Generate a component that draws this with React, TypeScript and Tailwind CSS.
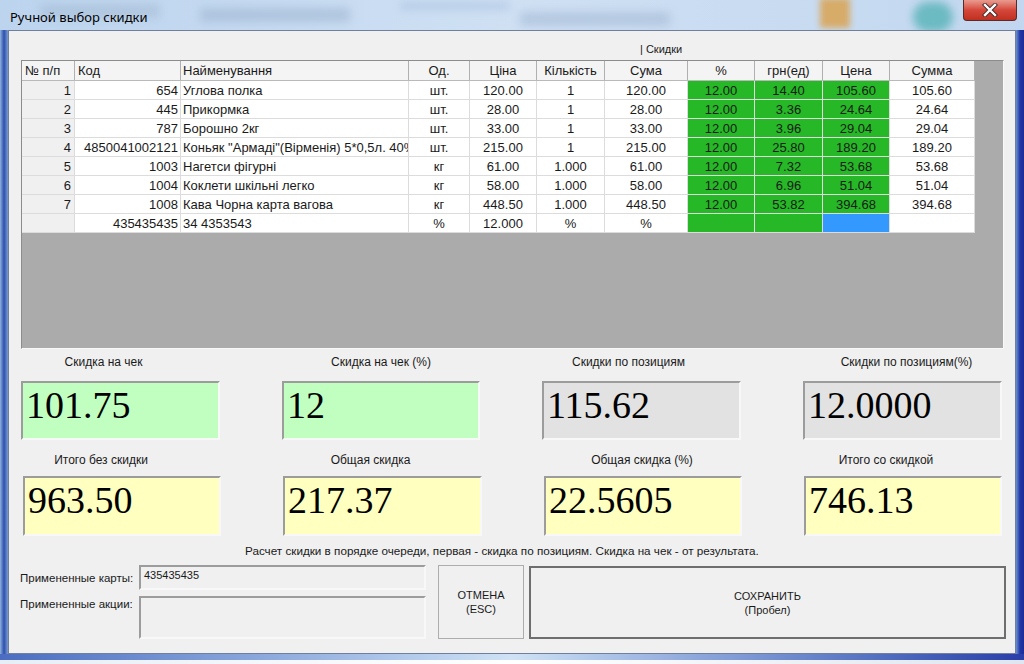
import React from 'react';

type Col = { w: string; title: string; head: string; cell: string };

const cols: Col[] = [
  { w: 'w-[53px]', title: '№ п/п', head: 'justify-start pl-[3px]', cell: 'justify-end pr-[3px]' },
  { w: 'w-[106px]', title: 'Код', head: 'justify-start pl-[3px]', cell: 'justify-end pr-[2px]' },
  { w: 'w-[228px]', title: 'Найменування', head: 'justify-start pl-[2px]', cell: 'justify-start pl-[2px]' },
  { w: 'w-[61px]', title: 'Од.', head: 'justify-center', cell: 'justify-center' },
  { w: 'w-[67px]', title: 'Ціна', head: 'justify-center', cell: 'justify-center' },
  { w: 'w-[68px]', title: 'Кількість', head: 'justify-center', cell: 'justify-center' },
  { w: 'w-[83px]', title: 'Сума', head: 'justify-center', cell: 'justify-center' },
  { w: 'w-[67px]', title: '%', head: 'justify-center', cell: 'justify-center' },
  { w: 'w-[68px]', title: 'грн(ед)', head: 'justify-center', cell: 'justify-center' },
  { w: 'w-[67px]', title: 'Цена', head: 'justify-center', cell: 'justify-center' },
  { w: 'w-[85px]', title: 'Сумма', head: 'justify-center', cell: 'justify-center' },
];

const rows: string[][] = [
  ['1', '654', 'Углова полка', 'шт.', '120.00', '1', '120.00', '12.00', '14.40', '105.60', '105.60'],
  ['2', '445', 'Прикормка', 'шт.', '28.00', '1', '28.00', '12.00', '3.36', '24.64', '24.64'],
  ['3', '787', 'Борошно 2кг', 'шт.', '33.00', '1', '33.00', '12.00', '3.96', '29.04', '29.04'],
  ['4', '4850041002121', 'Коньяк "Армаді"(Вірменія) 5*0,5л. 40%', 'шт.', '215.00', '1', '215.00', '12.00', '25.80', '189.20', '189.20'],
  ['5', '1003', 'Нагетси фігурні', 'кг', '61.00', '1.000', '61.00', '12.00', '7.32', '53.68', '53.68'],
  ['6', '1004', 'Коклети шкільні легко', 'кг', '58.00', '1.000', '58.00', '12.00', '6.96', '51.04', '51.04'],
  ['7', '1008', 'Кава Чорна карта вагова', 'кг', '448.50', '1.000', '448.50', '12.00', '53.82', '394.68', '394.68'],
  ['', '435435435', '34 4353543', '%', '12.000', '%', '%', '', '', '', ''],
];

function cellBg(r: number, c: number): string {
  if (c === 0) return 'bg-[#f0f0f0]';
  if (c === 7 || c === 8) return 'bg-[#26b826]';
  if (c === 9) return r === 7 ? 'bg-[#3399ff]' : 'bg-[#26b826]';
  return 'bg-white';
}

function Grid() {
  return (
    <div className="ml-[12px] w-[983px] h-[289px] bg-[#ababab] border-t border-l border-[#8c8c8c] border-r border-b border-r-[#f8f8f8] border-b-[#f8f8f8]">
      <div className="flex h-[20px] w-[953px] bg-[#f4f4f4] border-b border-[#b9b9b9]">
        {cols.map((c, i) => (
          <div key={i} className={`${c.w} ${c.head} flex items-center shrink-0 border-r border-[#b0b0b0] text-[13px] leading-[15px] text-[#1a1a1a] whitespace-nowrap overflow-hidden`}>
            {c.title}
          </div>
        ))}
      </div>
      {rows.map((row, r) => (
        <div key={r} className="flex h-[19px] w-[953px]">
          {row.map((v, c) => (
            <div key={c} className={`${cols[c].w} ${cols[c].cell} ${cellBg(r, c)} flex items-center shrink-0 border-r border-b border-[#dcdcdc] text-[13px] leading-[15px] text-[#1a1a1a] whitespace-nowrap overflow-hidden`}>
              {v}
            </div>
          ))}
        </div>
      ))}
    </div>
  );
}

function BigBox({ value, bg, w }: { value: string; bg: string; w: string }) {
  return (
    <div className={`${w} ${bg} shrink-0 border-2 border-t-[#9c9c9c] border-l-[#9c9c9c] border-r-[#f8f8f8] border-b-[#f8f8f8] pl-[3px] pt-[0px] font-['Liberation_Serif','Times_New_Roman',serif] text-[38px] leading-[44px] text-black`}>
      {value}
    </div>
  );
}

export default function App() {
  return (
    <div className="relative w-[1024px] h-[664px] overflow-hidden flex flex-col bg-gradient-to-b from-[#c4d9f1] to-[#a9c4e6] font-['Liberation_Sans',Arial,sans-serif]">
      {/* title bar */}
      <div className="relative h-[30px] shrink-0 overflow-hidden bg-gradient-to-r from-[#bcd4ee] via-[#cfe0f3] to-[#c2d7ef]">
        <div className="absolute left-[40px] top-[4px] w-[120px] h-[14px] bg-[#a6bcd6] blur-[5px] opacity-60" />
        <div className="absolute left-[200px] top-[8px] w-[150px] h-[14px] bg-[#9fb6d2] blur-[5px] opacity-60" />
        <div className="absolute left-[400px] top-[2px] w-[110px] h-[8px] bg-[#aac2e0] blur-[4px] opacity-60" />
        <div className="absolute left-[520px] top-[12px] w-[150px] h-[14px] bg-[#a3b9d4] blur-[5px] opacity-60" />
        <div className="absolute left-[820px] top-[-2px] w-[30px] h-[30px] bg-[#d9a65a] blur-[3px] opacity-90" />
        <div className="absolute left-[913px] top-[2px] w-[40px] h-[30px] rounded-full bg-[#63b7be] blur-[4px] opacity-90" />
        <div className="absolute left-[10px] top-[7px] text-[13px] leading-[20px] text-black font-['Noto_Sans',sans-serif]">
          Ручной выбор скидки
        </div>
        <div className="absolute left-[963px] top-0 w-[54px] h-[21px] rounded-b-[4px] border border-t-0 border-[#5a2a28] bg-gradient-to-b from-[#e89a90] via-[#d5473a] to-[#c0301f] flex items-center justify-center">
          <svg width="16" height="14" viewBox="0 0 16 14">
            <path d="M3 2 L13 12 M13 2 L3 12" stroke="#3b2a2a" strokeWidth="4.2" strokeLinecap="square" />
            <path d="M3 2 L13 12 M13 2 L3 12" stroke="#ffffff" strokeWidth="2.4" strokeLinecap="square" />
          </svg>
        </div>
      </div>
      {/* middle */}
      <div className="flex h-[624px] shrink-0">
        <div className="w-[8px] shrink-0 bg-gradient-to-r from-[#8fb0dc] via-[#2f4fae] to-[#7e9bd0]" />
        <div className="w-[1008px] shrink-0 bg-[#f0f0f0] border border-[#6f7f9c] flex flex-col text-[#1a1a1a]">
          <div className="h-[29px] shrink-0 pl-[631px] pt-[12px] text-[11px] leading-[13px]">| Скидки</div>
          <Grid />
          {/* summary row 1 labels */}
          <div className="flex ml-[12px] mt-[6px] gap-[62px] text-[12px] leading-[14px]">
            <div className="w-[199px] text-center pr-[34px]">Скидка на чек</div>
            <div className="w-[198px] text-center">Скидка на чек (%)</div>
            <div className="w-[199px] text-center pr-[26px]">Скидки по позициям</div>
            <div className="w-[199px] text-center pl-[8px]">Скидки по позициям(%)</div>
          </div>
          <div className="flex ml-[12px] mt-[12px] gap-[62px] h-[59px]">
            <BigBox value="101.75" bg="bg-[#c0ffc0]" w="w-[199px]" />
            <BigBox value="12" bg="bg-[#c0ffc0]" w="w-[198px]" />
            <BigBox value="115.62" bg="bg-[#e2e2e2]" w="w-[199px]" />
            <BigBox value="12.0000" bg="bg-[#e2e2e2]" w="w-[199px]" />
          </div>
          <div className="flex ml-[14px] mt-[13px] gap-[62px] text-[12px] leading-[14px]">
            <div className="w-[198px] text-center pr-[42px]">Итого без скидки</div>
            <div className="w-[199px] text-center pr-[24px]">Общая скидка</div>
            <div className="w-[198px] text-center pr-[2px]">Общая скидка (%)</div>
            <div className="w-[198px] text-center pr-[34px]">Итого со скидкой</div>
          </div>
          <div className="flex ml-[14px] mt-[9px] gap-[62px] h-[60px]">
            <BigBox value="963.50" bg="bg-[#ffffc0]" w="w-[198px]" />
            <BigBox value="217.37" bg="bg-[#ffffc0]" w="w-[199px]" />
            <BigBox value="22.5605" bg="bg-[#ffffc0]" w="w-[198px]" />
            <BigBox value="746.13" bg="bg-[#ffffc0]" w="w-[198px]" />
          </div>
          <div className="mt-[8px] pl-[236px] text-[11.7px] leading-[14px] whitespace-nowrap">
            Расчет скидки в порядке очереди, первая - скидка по позициям. Скидка на чек - от результата.
          </div>
          <div className="flex mt-[7px] ml-[11px]">
            <div className="flex flex-col gap-[6px]">
              <div className="flex h-[25px]">
                <div className="w-[119px] flex items-center text-[11.5px] leading-[14px]">Примененные карты:</div>
                <div className="w-[287px] border-2 border-t-[#9c9c9c] border-l-[#9c9c9c] border-r-[#f8f8f8] border-b-[#f8f8f8] bg-[#f0f0f0] pl-[3px] pt-[2px] text-[11px] leading-[13px]">
                  435435435
                </div>
              </div>
              <div className="flex h-[43px]">
                <div className="w-[119px] pt-[1px] text-[11.5px] leading-[14px]">Примененные акции:</div>
                <div className="w-[287px] border-2 border-t-[#9c9c9c] border-l-[#9c9c9c] border-r-[#f8f8f8] border-b-[#f8f8f8] bg-[#f0f0f0]" />
              </div>
            </div>
            <div className="ml-[12px] w-[86px] h-[74px] border border-[#adadad] bg-[#f0f0f0] flex flex-col items-center justify-center text-[11px] leading-[14px]">
              <div>ОТМЕНА</div>
              <div>(ESC)</div>
            </div>
            <div className="ml-[5px] mt-[1px] w-[477px] h-[73px] border-2 border-[#6e6e6e] bg-[#f0f0f0] flex flex-col items-center justify-center text-[11px] leading-[14px]">
              <div>СОХРАНИТЬ</div>
              <div>(Пробел)</div>
            </div>
          </div>
        </div>
        <div className="w-[8px] shrink-0 bg-gradient-to-r from-[#6f8fd0] via-[#2236a6] to-[#1a2c96]" />
      </div>
      <div className="h-[6px] shrink-0 bg-gradient-to-r from-[#4b6cc0] via-[#cfe2f5] to-[#2a3ea8]" />
      <div className="flex-1 bg-gradient-to-r from-[#e8eef6] via-[#ffffff] to-[#dfe6ef]" />
    </div>
  );
}
